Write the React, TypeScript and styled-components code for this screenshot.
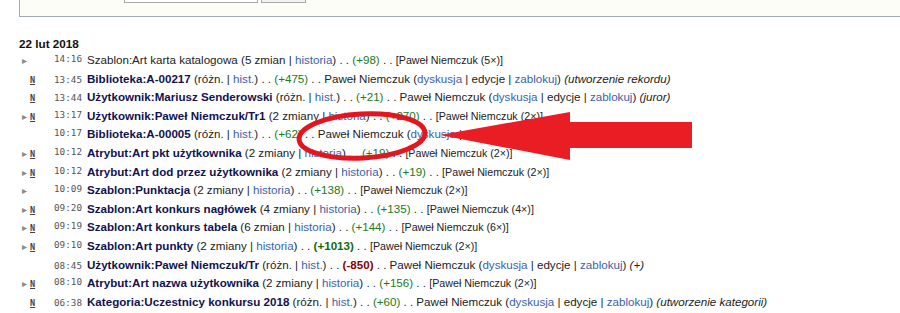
import styled, { createGlobalStyle } from "styled-components";

const GlobalStyle = createGlobalStyle`
  html, body {
    margin: 0;
    padding: 0;
    background: #ffffff;
  }
  body {
    font-family: "Liberation Sans", Arial, sans-serif;
    color: #222222;
    overflow: hidden;
  }
`;

type Part = { t: string; k?: "link" | "pos" | "neg" | "posBold" | "it" | "plain" };

type Change = {
  group: boolean;
  isNew: boolean;
  time: string;
  raised: boolean;
  title: string;
  bold: boolean;
  parts: Part[];
  users?: string;
};

const grouped = (n: string, diff: string, big = false): Part[] => [
  { t: ` (${n} | ` },
  { t: "historia", k: "link" },
  { t: ") . . " },
  { t: `(${diff})`, k: big ? "posBold" : "pos" },
  { t: " . . " },
];

const single = (diff: string, neg = false): Part[] => [
  { t: " (różn. | " },
  { t: "hist.", k: "link" },
  { t: ") . . " },
  { t: `(${diff})`, k: neg ? "neg" : "pos" },
  { t: " . . Paweł Niemczuk (" },
  { t: "dyskusja", k: "link" },
  { t: " | edycje | " },
  { t: "zablokuj", k: "link" },
  { t: ")" },
];

const changes: Change[] = [
  { group: true, isNew: false, time: "14:16", raised: true, title: "Szablon:Art karta katalogowa", bold: false, parts: grouped("5 zmian", "+98"), users: "[Paweł Niemczuk (5×)]" },
  { group: false, isNew: true, time: "13:45", raised: false, title: "Biblioteka:A-00217", bold: true, parts: [...single("+475"), { t: " " }, { t: "(utworzenie rekordu)", k: "it" }] },
  { group: false, isNew: true, time: "13:44", raised: false, title: "Użytkownik:Mariusz Senderowski", bold: true, parts: [...single("+21"), { t: " " }, { t: "(juror)", k: "it" }] },
  { group: true, isNew: true, time: "13:17", raised: true, title: "Użytkownik:Paweł Niemczuk/Tr1", bold: true, parts: grouped("2 zmiany", "+270"), users: "[Paweł Niemczuk (2×)]" },
  { group: false, isNew: false, time: "10:17", raised: true, title: "Biblioteka:A-00005", bold: true, parts: single("+62") },
  { group: true, isNew: true, time: "10:12", raised: true, title: "Atrybut:Art pkt użytkownika", bold: true, parts: grouped("2 zmiany", "+19"), users: "[Paweł Niemczuk (2×)]" },
  { group: true, isNew: true, time: "10:12", raised: true, title: "Atrybut:Art dod przez użytkownika", bold: true, parts: grouped("2 zmiany", "+19"), users: "[Paweł Niemczuk (2×)]" },
  { group: true, isNew: false, time: "10:09", raised: true, title: "Szablon:Punktacja", bold: true, parts: grouped("2 zmiany", "+138"), users: "[Paweł Niemczuk (2×)]" },
  { group: true, isNew: true, time: "09:20", raised: true, title: "Szablon:Art konkurs nagłówek", bold: true, parts: grouped("4 zmiany", "+135"), users: "[Paweł Niemczuk (4×)]" },
  { group: true, isNew: true, time: "09:19", raised: true, title: "Szablon:Art konkurs tabela", bold: true, parts: grouped("6 zmian", "+144"), users: "[Paweł Niemczuk (6×)]" },
  { group: true, isNew: true, time: "09:10", raised: true, title: "Szablon:Art punkty", bold: true, parts: grouped("2 zmiany", "+1013", true), users: "[Paweł Niemczuk (2×)]" },
  { group: false, isNew: false, time: "08:45", raised: false, title: "Użytkownik:Paweł Niemczuk/Tr", bold: true, parts: [...single("-850", true), { t: " " }, { t: "(+)", k: "it" }] },
  { group: true, isNew: true, time: "08:10", raised: true, title: "Atrybut:Art nazwa użytkownika", bold: true, parts: grouped("2 zmiany", "+156"), users: "[Paweł Niemczuk (2×)]" },
  { group: false, isNew: true, time: "06:38", raised: false, title: "Kategoria:Uczestnicy konkursu 2018", bold: true, parts: [...single("+60"), { t: " " }, { t: "(utworzenie kategorii)", k: "it" }] },
];

const App = () => {
  return (
    <Page>
      <GlobalStyle />
      <Fieldset>
        <SearchInput />
        <SearchButton />
      </Fieldset>
      <DateHeading>22 lut 2018</DateHeading>
      <List>
        {changes.map((c, i) => (
          <Row key={i}>
            <Toggle>{c.group ? "▸" : ""}</Toggle>
            <NewFlag>{c.isNew ? "N" : ""}</NewFlag>
            <Time $raised={c.raised}>{c.time}</Time>
            <Content>
              <Title $bold={c.bold}>{c.title}</Title>
              {c.parts.map((p, j) => (
                <Piece key={j} $kind={p.k || "plain"}>
                  {p.t}
                </Piece>
              ))}
              {c.users && <Users>{c.users}</Users>}
            </Content>
          </Row>
        ))}
      </List>
      <Overlay width="900" height="313" viewBox="0 0 900 313">
        <ellipse
          cx="362"
          cy="136"
          rx="63"
          ry="22"
          fill="none"
          stroke="#e3161f"
          strokeWidth="5"
          transform="rotate(-3 362 136)"
        />
        <polygon
          points="440,135 570,112 570,122 692,122 692,148 570,148 570,160"
          fill="#ea1c24"
        />
      </Overlay>
    </Page>
  );
};

export default App;

const Page = styled.div`
  position: relative;
  width: 900px;
  height: 313px;
  padding-left: 19px;
  box-sizing: border-box;
  overflow: hidden;
`;

const Fieldset = styled.div`
  height: 17px;
  margin-right: -20px;
  box-sizing: border-box;
  border: 1px solid #a2a9b1;
  border-top: none;
  background: #fdfdf7;
  padding-left: 104px;
  display: flex;
  align-items: flex-end;
  gap: 3px;
  padding-bottom: 13px;
`;

const SearchInput = styled.div`
  width: 132px;
  height: 8px;
  border: 1px solid #a9a9a9;
  border-top: none;
  background: #ffffff;
`;

const SearchButton = styled.div`
  width: 43px;
  height: 8px;
  border: 1px solid #a9a9a9;
  border-top: none;
  background: #f2f2f2;
`;

const DateHeading = styled.h4`
  margin: 19px 0 0 0;
  font-size: 11.7px;
  font-weight: bold;
  line-height: 16px;
  color: #111111;
`;

const List = styled.div`
  display: flex;
  flex-direction: column;
  margin-top: -1px;
`;

const Row = styled.div`
  display: flex;
  align-items: baseline;
  height: 18.6px;
  line-height: 18.6px;
  white-space: nowrap;
`;

const Toggle = styled.span`
  width: 11px;
  box-sizing: border-box;
  font-size: 10px;
  color: #8a8a8a;
  padding-left: 3px;
`;

const NewFlag = styled.span`
  width: 14px;
  font-family: "DejaVu Sans Mono", monospace;
  font-size: 8.5px;
  font-weight: bold;
  text-decoration: underline;
  color: #444444;
`;

const Time = styled.span<{ $raised: boolean }>`
  width: 43px;
  box-sizing: border-box;
  padding-right: 5px;
  text-align: right;
  font-family: "DejaVu Sans Mono", monospace;
  font-size: 9.3px;
  color: #555555;
  position: relative;
  top: ${(p) => (p.$raised ? "-2px" : "0")};
`;

const Content = styled.span`
  font-size: 11.6px;
  color: #222222;
`;

const Title = styled.span<{ $bold: boolean }>`
  font-weight: ${(p) => (p.$bold ? "bold" : "normal")};
  color: ${(p) => (p.$bold ? "#121250" : "#222222")};
`;

const kindColor: Record<string, string> = {
  link: "#3a62a8",
  pos: "#217821",
  posBold: "#0f6a0f",
  neg: "#8b0000",
  it: "#222222",
  plain: "#222222",
};

const Piece = styled.span<{ $kind: string }>`
  color: ${(p) => kindColor[p.$kind]};
  font-weight: ${(p) => (p.$kind === "posBold" || p.$kind === "neg" ? "bold" : "normal")};
  font-style: ${(p) => (p.$kind === "it" ? "italic" : "normal")};
`;

const Users = styled.span`
  font-size: 10.7px;
  color: #222222;
`;

const Overlay = styled.svg`
  position: absolute;
  left: 0;
  top: 0;
  pointer-events: none;
`;
